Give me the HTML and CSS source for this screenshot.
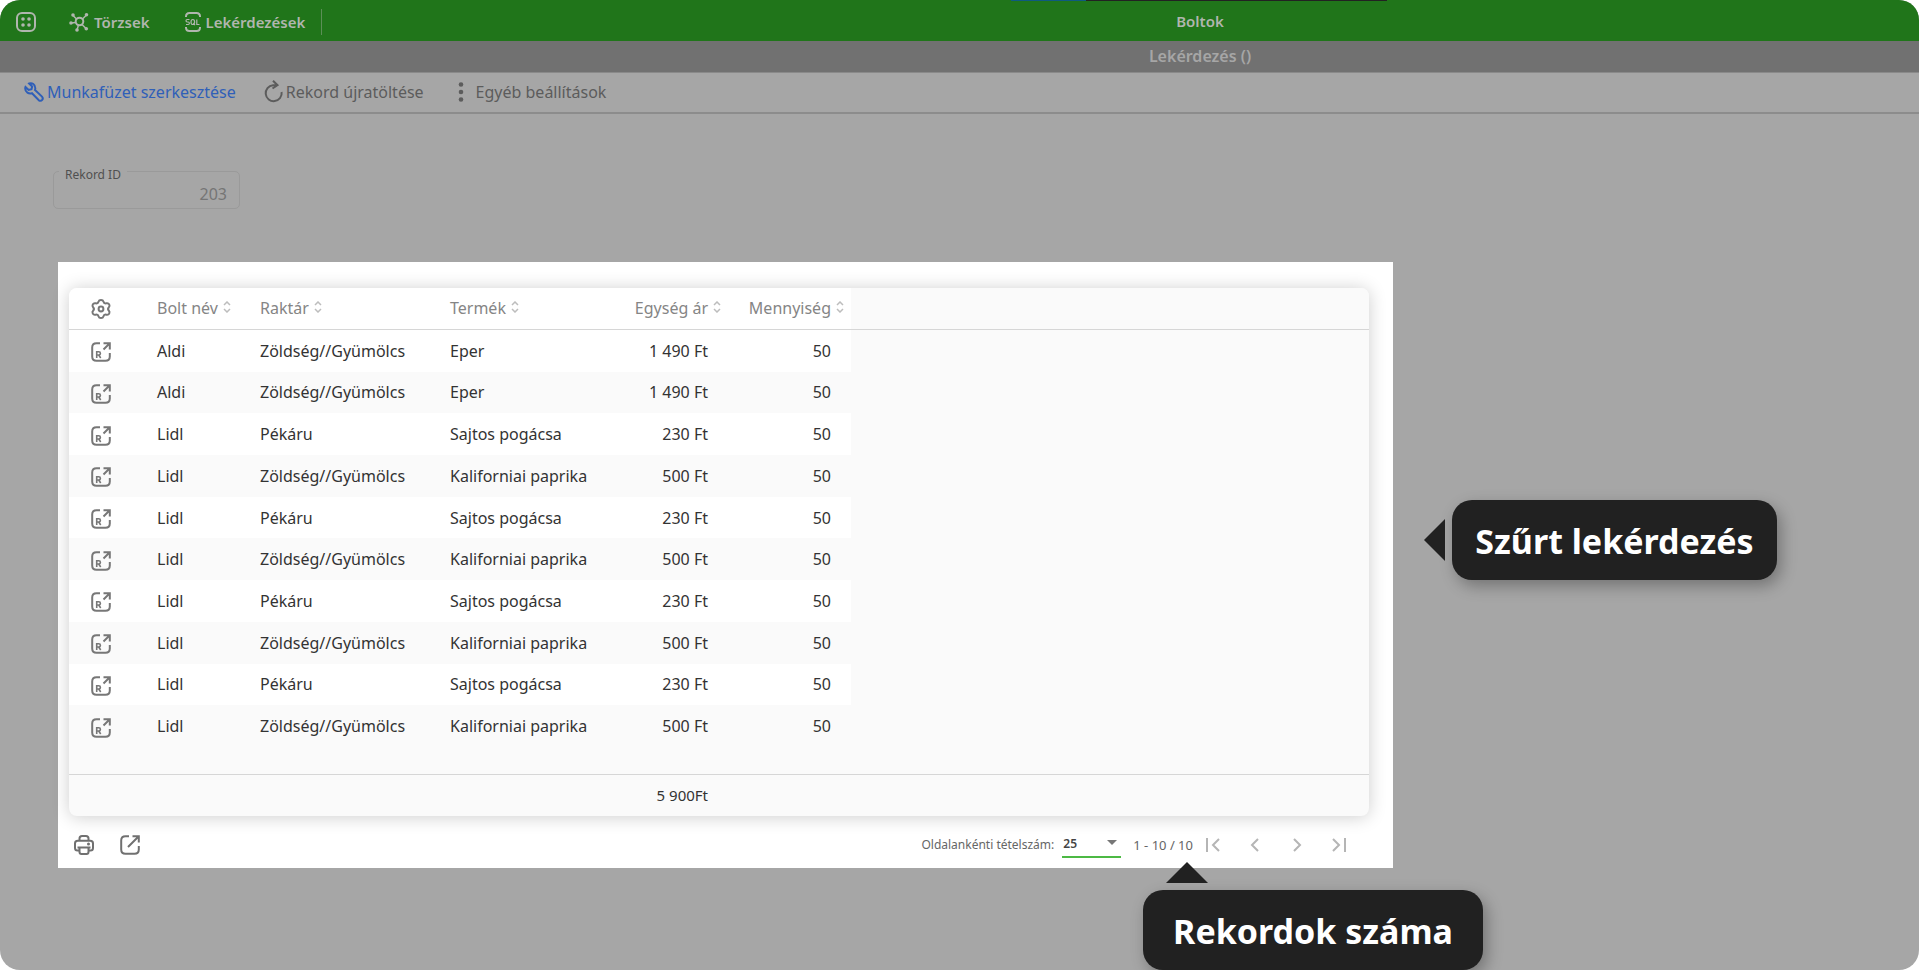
FILE: index.html
```html
<!DOCTYPE html>
<html lang="hu">
<head>
<meta charset="utf-8">
<title>Boltok – Lekérdezés</title>
<link rel="stylesheet" href="styles.css">
</head>
<body>
<svg class="sprite" aria-hidden="true">
  <symbol id="sort" viewBox="0 0 8 12"><path d="M1 4l3-3 3 3M1 8l3 3 3-3"/></symbol>
  <symbol id="open-record" viewBox="0 0 20 20"><path d="M9 1.200H5.500Q1.200 1.200 1.200 5.500V14.500Q1.200 18.800 5.500 18.800H14.500Q18.800 18.800 18.800 14.500V11M12.500 1.200H18.800V7.500M18.500 1.500L12.500 7.500"/><path class="letter" d="M5.700 16V9.800H7.700Q9.400 9.800 9.400 11.400T7.700 13H5.700M7.700 13L9.700 16"/></symbol>
</svg>
<div class="app">
  <header class="topbar">
    <nav class="nav">
      <button class="nav-grid" aria-label="Alkalmazások"><svg class="ico" viewBox="0 0 20 20"><rect x="1" y="1" width="18" height="18" rx="5"/><g class="solid"><circle cx="7" cy="7" r="1.800"/><circle cx="13" cy="7" r="1.800"/><circle cx="7" cy="13" r="1.800"/><circle cx="13" cy="13" r="1.800"/></g></svg></button>
      <a class="nav-link nav-base" href="#torzsek"><svg class="ico" viewBox="0 0 20 20"><circle cx="10.500" cy="9.500" r="3.800"/><path class="spokes" d="M7.500 7L4 3.500M13.500 7L17.500 3M6.800 10.500L2 11M9.500 13L8 18M13 12.500L17 16.500"/><g class="solid"><circle cx="4" cy="3" r="1.800"/><circle cx="17.500" cy="2.800" r="1.800"/><circle cx="2" cy="11" r="1.800"/><circle cx="8" cy="18" r="1.800"/><circle cx="17.300" cy="16.800" r="1.800"/></g></svg>Törzsek</a>
      <a class="nav-link" href="#lekerdezesek"><svg class="ico ico-sql" viewBox="0 0 16 20"><path d="M1 5V4.500Q1 1 4.500 1H11.500Q15 1 15 4.500V5M1 15V15.500Q1 19 4.500 19H11.500Q15 19 15 15.500V15"/><path class="thin" d="M4.500 7.500H2.200Q1 7.500 1 8.700T2.200 10H3.200Q4.400 10 4.400 11.200T3.200 12.500H1M7.800 7.500Q6 7.500 6 10T7.800 12.500 9.600 10 7.800 7.500M8.300 11L10 13.200M11.800 7.500V12.500H14.500"/></svg>Lekérdezések</a>
    </nav>
    <h1 class="title">Boltok</h1>
    <span class="loadstrip"></span>
  </header>
  <div class="subbar"><h2 class="title title-sub">Lekérdezés ()</h2></div>
  <div class="toolbar">
    <button class="tool tool-primary"><svg class="ico" viewBox="0 0 20 20"><path d="M5.200 1.500C8 0.400 11.400 2.400 11.300 6.200Q11.300 7.300 11 8L18 14.600Q19.500 16.300 18.200 17.900T14.800 18.300L8 11.200C4.800 12.300 1.200 10.200 1.200 6.500Q1.200 5.700 1.500 5L4.600 8 7.500 7.200 8.200 4.500Z"/></svg>Munkafüzet szerkesztése</button>
    <button class="tool tool-reload"><svg class="ico" viewBox="0 0 20 20"><path d="M14 3.200H10A8 8 0 1 0 18.600 10M10 -1.200L14.500 3.200 9.500 6.500"/></svg>Rekord újratöltése</button>
    <button class="tool tool-more"><svg class="ico ico-dots" viewBox="0 0 6 20"><g class="solid"><circle cx="3" cy="2.500" r="2.300"/><circle cx="3" cy="10" r="2.300"/><circle cx="3" cy="17.500" r="2.300"/></g></svg>Egyéb beállítások</button>
  </div>
  <main class="content">
    <div class="field">
      <label for="rid">Rekord ID</label>
      <input id="rid" type="text" value="203" disabled>
    </div>
    <section class="panel">
      <div class="card">
        <table class="grid">
          <colgroup><col class="c-act"><col class="c-shop"><col class="c-store"><col class="c-item"><col class="c-price"><col class="c-qty"><col></colgroup>
          <thead><tr>
            <th class="act"><button aria-label="Beállítások"><svg class="ico" viewBox="0 0 20 20"><path d="M7.600 2.600Q8 1 10 1T12.400 2.600Q13 4.800 15.200 4.300 17.300 3.700 18.200 5.400T17.900 8.200Q16.200 10 17.900 11.800 19 13 18.200 14.600T15.200 15.700Q13 15.200 12.400 17.400 12 19 10 19T7.600 17.400Q7 15.200 4.800 15.700 2.700 16.300 1.800 14.600T2.100 11.800Q3.800 10 2.100 8.200 1 7 1.800 5.400T4.800 4.300Q7 4.800 7.600 2.600Z"/><circle cx="10" cy="10" r="2.400"/></svg></button></th>
            <th><button>Bolt név<svg class="sort"><use href="#sort"/></svg></button></th>
            <th><button>Raktár<svg class="sort"><use href="#sort"/></svg></button></th>
            <th><button>Termék<svg class="sort"><use href="#sort"/></svg></button></th>
            <th class="num"><button>Egység ár<svg class="sort"><use href="#sort"/></svg></button></th>
            <th class="num"><button>Mennyiség<svg class="sort"><use href="#sort"/></svg></button></th>
            <th class="rest"></th>
          </tr></thead>
          <tbody id="rows"></tbody>
          <tfoot>
            <tr class="space"><td colspan="7"></td></tr>
            <tr class="sum"><td colspan="4"></td><td class="num">5 900Ft</td><td colspan="2"></td></tr>
          </tfoot>
        </table>
      </div>
      <div class="actions">
        <button aria-label="Nyomtatás"><svg class="ico" viewBox="0 0 20 20"><path d="M5.500 5.500V3.500Q5.500 1 8 1H12Q14.500 1 14.500 3.500V5.500M5.500 15.500H3.500Q1 15.500 1 13V8.500Q1 5.800 3.700 5.800H16.300Q19 5.800 19 8.500V13Q19 15.500 16.500 15.500H14.500M3.500 12.500H16.500M5.500 12.500V17Q5.500 19 7.500 19H12.500Q14.500 19 14.500 17V12.500"/><g class="solid"><circle cx="14.500" cy="9" r="1.500"/></g></svg></button>
        <button aria-label="Exportálás"><svg class="ico" viewBox="0 0 20 20"><path d="M9 1.200H5.500Q1.200 1.200 1.200 5.500V14.500Q1.200 18.800 5.500 18.800H14.500Q18.800 18.800 18.800 14.500V11M12.500 1.200H18.800V7.500M18.500 1.500L8 12"/></svg></button>
        <div class="pager">
          <label for="size">Oldalankénti tételszám:</label>
          <span class="select"><select id="size"><option>25</option></select></span>
          <span class="range">1 - 10 / 10</span>
          <button aria-label="Első oldal"><svg viewBox="0 0 16 16"><path d="M2 1V15M14 2L8 8l6 6"/></svg></button>
          <button aria-label="Előző oldal"><svg viewBox="0 0 16 16"><path d="M11 2L5 8l6 6"/></svg></button>
          <button aria-label="Következő oldal"><svg viewBox="0 0 16 16"><path d="M5 2l6 6-6 6"/></svg></button>
          <button aria-label="Utolsó oldal"><svg viewBox="0 0 16 16"><path d="M2 2l6 6-6 6M14 1V15"/></svg></button>
        </div>
      </div>
      <div class="callout callout-side">Szűrt lekérdezés</div>
      <div class="callout callout-below">Rekordok száma</div>
    </section>
  </main>
</div>
<script src="app.js"></script>
</body>
</html>
```
FILE: styles.css
```css
* { box-sizing: border-box; }
body { margin: 0; background: #fff; font-family: "Noto Sans", sans-serif; font-size: 16px; line-height: 20px; color: #333; }
button { border: 0; padding: 0; background: none; font: inherit; color: inherit; cursor: pointer; }
svg { fill: none; stroke: currentColor; stroke-width: 2; flex: none; }
.sprite { position: absolute; width: 0; height: 0; }
.ico { width: 20px; height: 20px; display: block; overflow: visible; }
.solid { fill: currentColor; stroke: none; }
.thin { stroke-width: 1.2; }
.spokes { stroke-width: 1.5; }
.letter { stroke-width: 1.6; }
.app { display: flex; flex-direction: column; min-height: 100vh; background: #a6a6a6; border-radius: 20px; overflow: hidden; }

.topbar { position: relative; display: flex; align-items: center; height: 41px; background: #20751a; color: #b0b6ae; }
.nav { display: flex; align-items: center; width: 322px; height: 26px; margin: 2px 159px 0 0; padding-left: 16px; border-right: 1px solid #5c8f57; font-size: 15px; }
.nav-link { display: flex; align-items: center; gap: 5px; margin-left: 35px; color: inherit; text-decoration: none; font-weight: 600; }
.nav-base { margin-left: 33px; }
.title { flex: 1; margin: 0; text-align: center; font-size: 15px; line-height: 20px; font-weight: 600; }
.title-sub { font-size: 16px; }
.nav-link .ico-sql { width: 16px; }
.loadstrip { position: absolute; top: 0; left: 1011px; width: 376px; height: 1px; background: linear-gradient(to right, #0f5a80 20%, #222 20%); }
.subbar { display: flex; align-items: center; height: 32px; padding: 0 0 1px 481px; background: #717171; border-bottom: 1px solid #8a8a8a; color: #a6a6a6; }
.toolbar { display: flex; align-items: center; height: 41px; padding: 0 0 2px 24px; border-bottom: 2px solid #8c8c8c; color: #5c5c5c; }
.tool { display: flex; align-items: center; gap: 3px; }
.tool-primary { color: #2f5fb8; }
.tool-reload { margin-left: 27px; }
.tool-more { margin-left: 34px; gap: 12px; }
.ico-dots { width: 6px; }

.content { display: grid; grid-template-columns: 1335fr 526fr; padding: 57px 0 0 58px; }
.field { position: relative; grid-column: 1 / -1; width: 187px; height: 38px; margin: 0 0 53px -5px; padding: 12px 12px 0; border: 1px solid #9a9a9a; border-radius: 5px; }
.field label { position: absolute; left: 5px; top: -4px; padding: 0 6px; background: #a6a6a6; font-size: 12px; line-height: 14px; color: #505050; }
.field input { display: block; width: 100%; height: 20px; padding: 0; border: 0; background: none; text-align: right; font: inherit; color: #757575; }

.panel { position: relative; padding: 26px 24px 0 11px; background: #fff; }
.card { overflow: hidden; border-radius: 8px; background: #fafafa; box-shadow: 0 1px 18px rgba(0, 0, 0, .2); }
.grid { width: 100%; height: 528px; table-layout: fixed; border-collapse: collapse; }
.grid th, .grid td { padding: 0 0 0 16px; text-align: left; font-weight: 400; white-space: nowrap; }
.c-act { width: 72px; }
.c-shop { width: 103px; }
.c-store { width: 190px; }
.c-item { width: 171px; }
.c-qty, .c-price { width: 123px; }
.grid thead tr { height: 41px; border-bottom: 1px solid #d6d6d6; }
.grid th { padding-bottom: 2px; background: #fff; color: #858585; }
.grid th button { display: inline-flex; align-items: center; gap: 5px; vertical-align: middle; }
.grid .sort { width: 8px; height: 12px; margin-bottom: 3px; color: #bdbdbd; stroke-width: 1.5; }
.grid .act { color: #777; }
.grid .act a { display: block; width: 20px; color: #777; }
.grid th.act { padding: 0 0 0 22px; }
.grid td.act { padding: 3px 0 0 22px; }
.grid th.num { padding: 0 7px 2px 0; text-align: right; }
.grid td.num { padding: 0 20px 0 0; text-align: right; }
.grid tbody tr:nth-child(odd) td { background: #fff; }
.grid .rest, .grid tbody tr td.rest { background: #fafafa; }
.grid .space { height: 27px; border-bottom: 1px solid #d6d6d6; }
.grid .sum { height: 42px; font-size: 15px; }

.actions { display: flex; align-items: center; gap: 26px; height: 52px; padding: 6px 22px 0 5px; color: #707070; }
.pager { display: flex; align-items: center; margin-left: auto; font-size: 12px; line-height: 16px; color: #666; }
.select { margin: 0 12px 0 8px; border-bottom: 2px solid #4cb944; position: relative; }
.select::after { content: ""; position: absolute; right: 4px; top: 8px; border: 5px solid transparent; border-top-color: #777; border-bottom: 0; pointer-events: none; }
.select select { appearance: none; display: block; width: 59px; height: 24px; padding: 0 0 0 1px; border: 0; background: none; font: inherit; font-weight: 600; color: #444; }
.range { font-size: 13px; }
.pager button { width: 16px; height: 16px; margin-left: 26px; color: #b5b5b5; }
.pager .range + button { margin-left: 12px; }
.pager svg { display: block; }

.callout { position: absolute; display: flex; align-items: center; justify-content: center; height: 80px; padding-top: 2px; border-radius: 20px; background: #212121; color: #fff; font-size: 34px; line-height: 44px; font-weight: 700; white-space: nowrap; box-shadow: 4px 6px 16px rgba(0, 0, 0, .3); }
.callout::before { content: ""; position: absolute; border: 21px solid transparent; }
.callout-side { left: 100%; top: 238px; width: 325px; margin-left: 59px; }
.callout-side::before { right: 100%; top: 19px; margin-right: 7px; border-right-color: #212121; border-left: 0; }
.callout-below { right: -90px; top: 100%; width: 340px; margin-top: 22px; }
.callout-below::before { left: 23px; bottom: 100%; margin-bottom: 7px; border-bottom-color: #212121; border-top: 0; }
```
FILE: app.js
```js
const veg = ["Lidl", "Zöldség//Gyümölcs", "Kaliforniai paprika", "500 Ft", "50"];
const bakery = ["Lidl", "Pékáru", "Sajtos pogácsa", "230 Ft", "50"];
const fruit = ["Aldi", "Zöldség//Gyümölcs", "Eper", "1 490 Ft", "50"];
const rows = [fruit, fruit, bakery, veg, bakery, veg, bakery, veg, bakery, veg];

document.getElementById("rows").innerHTML = rows.map(([shop, store, item, price, qty]) => `
  <tr>
    <td class="act"><a href="#rekord" aria-label="Rekord megnyitása"><svg class="ico"><use href="#open-record"/></svg></a></td>
    <td>${shop}</td><td>${store}</td><td>${item}</td>
    <td class="num">${price}</td><td class="num">${qty}</td><td class="rest"></td>
  </tr>`).join("");
```
